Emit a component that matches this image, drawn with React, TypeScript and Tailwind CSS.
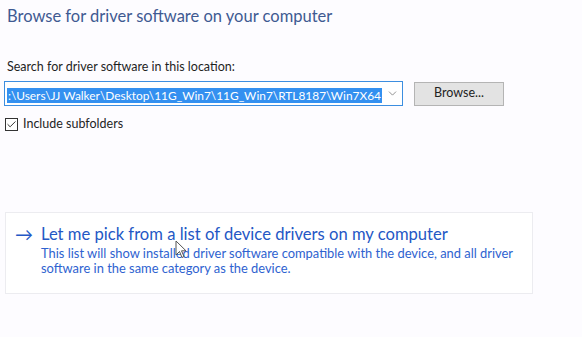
import { Check, ChevronDown } from "lucide-react";

const font = { fontFamily: '"Segoe UI", "Lato", "Noto Sans", sans-serif' };

const PathBox = () => (
  <div className="flex items-center">
    <div className="flex h-[25px] w-[399px] items-center border border-[#3c8ee0] bg-white pl-[2px]">
      <div className="flex-1 overflow-hidden whitespace-nowrap">
        <span className="bg-[#3390f0] px-[1px] text-[11.9px] leading-[18px] text-white">
          :\Users\JJ Walker\Desktop\11G_Win7\11G_Win7\RTL8187\Win7X64
        </span>
      </div>
      <div className="flex w-[20px] justify-center">
        <ChevronDown size={13} strokeWidth={1.5} className="text-[#7a7a7a]" />
      </div>
    </div>
    <button className="ml-[11px] h-[24px] w-[90px] border border-[#b4b4b4] bg-[#e3e3e3] text-[12.5px] text-[#222]">
      Browse...
    </button>
  </div>
);

const Cursor = () => (
  <svg className="absolute left-[175px] top-[240px]" width="12" height="20" viewBox="0 0 12 20">
    <path d="M1 1 L1 15 L4.5 11.5 L7 17.5 L9 16.5 L6.5 10.8 L11 10.8 Z" fill="#fff" stroke="#555" strokeWidth="1" strokeLinejoin="round" />
  </svg>
);

export default function App() {
  return (
    <div className="relative h-[337px] w-[582px] overflow-hidden bg-[#fdfcff]" style={font}>
      <div className="px-[7px] pt-[5px]">
        <h1 className="text-[16.5px] leading-[22px] text-[#3f5a92]">Browse for driver software on your computer</h1>
      </div>
      <div className="mt-[32px] pl-[7px] text-[12.5px] leading-[16px] text-[#1f1f1f]">Search for driver software in this location:</div>
      <div className="mt-[6px] pl-[4px]">
        <PathBox />
      </div>
      <label className="mt-[10px] flex items-center pl-[5px] text-[12.5px] text-[#1f1f1f]">
        <span className="flex h-[13px] w-[13px] items-center justify-center border border-[#333] bg-white">
          <Check size={11} strokeWidth={2} className="text-[#222]" />
        </span>
        <span className="ml-[5px] leading-[16px]">Include subfolders</span>
      </label>

      <div className="ml-[5px] mt-[80px] h-[82px] w-[528px] border border-[#ececf0] bg-white pl-[9px] pt-[10px]">
        <div className="flex items-center">
          <span className="w-[26px] text-[18px] leading-[22px] text-[#2457c5]">→</span>
          <span className="text-[16.6px] leading-[22px] text-[#2457c5]">Let me pick from a list of device drivers on my computer</span>
        </div>
        <div className="pl-[26px] pt-[1px] text-[12.9px] leading-[15px] text-[#2e62d0]">
          <div>This list will show installed driver software compatible with the device, and all driver</div>
          <div>software in the same category as the device.</div>
        </div>
      </div>
      <Cursor />
    </div>
  );
}
